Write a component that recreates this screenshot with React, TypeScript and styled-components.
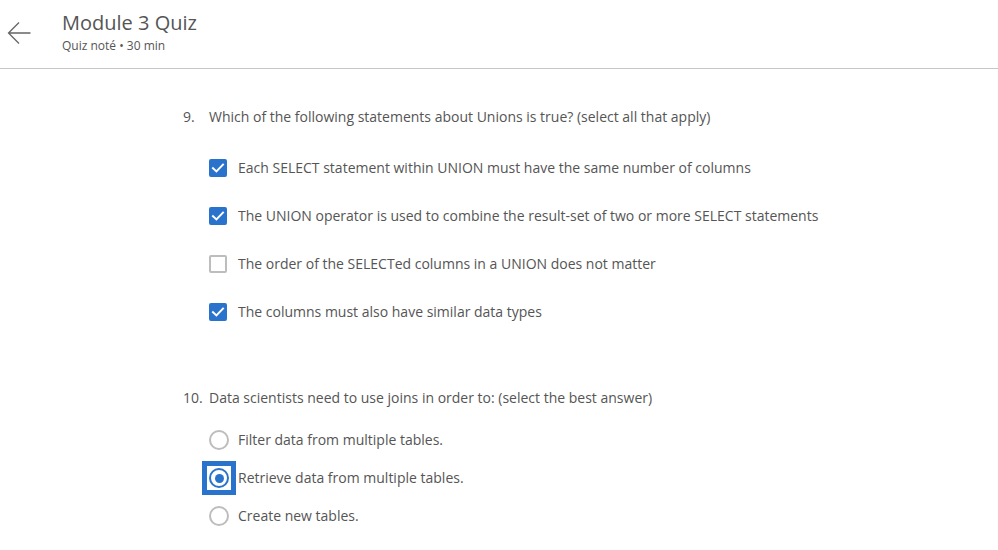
import React from "react";
import styled, { createGlobalStyle } from "styled-components";

const Global = createGlobalStyle`
  html, body { margin: 0; padding: 0; background: #fff; }
  body { font-family: "Open Sans", "Liberation Sans", sans-serif; color: #555; }
`;

const Header = styled.header`
  height: 69px;
  border-bottom: 1px solid #c6c6c6;
  display: flex;
  align-items: flex-start;
  box-sizing: border-box;
`;

const BackButton = styled.button`
  border: none;
  background: none;
  padding: 0;
  margin: 21px 0 0 7px;
  width: 24px;
  height: 24px;
  display: flex;
  color: #666;
  cursor: pointer;
`;

const TitleBlock = styled.div`
  margin: 9px 0 0 31px;
  display: flex;
  flex-direction: column;
`;

const Title = styled.h1`
  margin: 0;
  font-size: 20px;
  line-height: 28px;
  font-weight: 400;
  color: #555;
`;

const Subtitle = styled.div`
  font-size: 12px;
  line-height: 17px;
  color: #555;
`;

const Main = styled.main`
  padding: 38px 0 0 183px;
`;

const Question = styled.section<{ $gap: number }>`
  display: flex;
  flex-direction: column;
  margin-bottom: ${(p) => p.$gap}px;
`;

const Prompt = styled.div`
  display: flex;
  font-size: 14px;
  line-height: 20px;
  color: #555;
`;

const Num = styled.span`
  width: 26px;
  flex: none;
`;

const Options = styled.div<{ $top: number; $gap: number }>`
  display: flex;
  flex-direction: column;
  gap: ${(p) => p.$gap}px;
  margin-top: ${(p) => p.$top}px;
  padding-left: 26px;
`;

const Option = styled.label`
  display: flex;
  align-items: center;
  height: 20px;
  font-size: 14px;
  line-height: 20px;
  color: #555;
  position: relative;
`;

const Box = styled.span<{ $checked: boolean }>`
  width: 18px;
  height: 18px;
  box-sizing: border-box;
  border-radius: 2px;
  margin-right: 11px;
  flex: none;
  display: flex;
  align-items: center;
  justify-content: center;
  background: ${(p) => (p.$checked ? "#2a73cc" : "#fff")};
  border: 2px solid ${(p) => (p.$checked ? "#2a73cc" : "#bdbdbd")};
`;

const RadioWrap = styled.span`
  width: 20px;
  height: 20px;
  margin-right: 9px;
  flex: none;
  position: relative;
  display: flex;
  align-items: center;
  justify-content: center;
`;

const Focus = styled.span`
  position: absolute;
  left: -7px;
  top: -7px;
  width: 34px;
  height: 34px;
  box-sizing: border-box;
  border: 5px solid #2a73cc;
  background: #fff;
`;

const Circle = styled.span<{ $checked: boolean }>`
  position: relative;
  width: 20px;
  height: 20px;
  box-sizing: border-box;
  border-radius: 50%;
  border: 2px solid ${(p) => (p.$checked ? "#2a73cc" : "#bdbdbd")};
  background: #fff;
  display: flex;
  align-items: center;
  justify-content: center;
`;

const Dot = styled.span`
  width: 9px;
  height: 9px;
  border-radius: 50%;
  background: #2a73cc;
`;

const Check = () => (
  <svg width="14" height="14" viewBox="0 0 14 14" fill="none">
    <path d="M2 7.2 L5.4 10.4 L12 3.6" stroke="#fff" strokeWidth="2" strokeLinecap="square" strokeLinejoin="miter" />
  </svg>
);

const Arrow = () => (
  <svg width="24" height="24" viewBox="0 0 24 24" fill="none">
    <path d="M23.5 12 H1.5 M12 1.5 L1.5 12 L12 22.5" stroke="#666" strokeWidth="1.3" />
  </svg>
);

const q9 = [
  { text: "Each SELECT statement within UNION must have the same number of columns", checked: true },
  { text: "The UNION operator is used to combine the result-set of two or more SELECT statements", checked: true },
  { text: "The order of the SELECTed columns in a UNION does not matter", checked: false },
  { text: "The columns must also have similar data types", checked: true },
];

const q10 = [
  { text: "Filter data from multiple tables.", checked: false },
  { text: "Retrieve data from multiple tables.", checked: true },
  { text: "Create new tables.", checked: false },
];

export default function App() {
  return (
    <>
      <Global />
      <Header>
        <BackButton aria-label="Back">
          <Arrow />
        </BackButton>
        <TitleBlock>
          <Title>Module 3 Quiz</Title>
          <Subtitle>Quiz noté • 30 min</Subtitle>
        </TitleBlock>
      </Header>
      <Main>
        <Question $gap={66}>
          <Prompt>
            <Num>9.</Num>
            <span>Which of the following statements about Unions is true? (select all that apply)</span>
          </Prompt>
          <Options $top={31} $gap={28}>
            {q9.map((o) => (
              <Option key={o.text}>
                <Box $checked={o.checked}>{o.checked && <Check />}</Box>
                {o.text}
              </Option>
            ))}
          </Options>
        </Question>
        <Question $gap={0}>
          <Prompt>
            <Num>10.</Num>
            <span>Data scientists need to use joins in order to: (select the best answer)</span>
          </Prompt>
          <Options $top={22} $gap={18}>
            {q10.map((o) => (
              <Option key={o.text}>
                <RadioWrap>
                  {o.checked && <Focus />}
                  <Circle $checked={o.checked}>{o.checked && <Dot />}</Circle>
                </RadioWrap>
                {o.text}
              </Option>
            ))}
          </Options>
        </Question>
      </Main>
    </>
  );
}
